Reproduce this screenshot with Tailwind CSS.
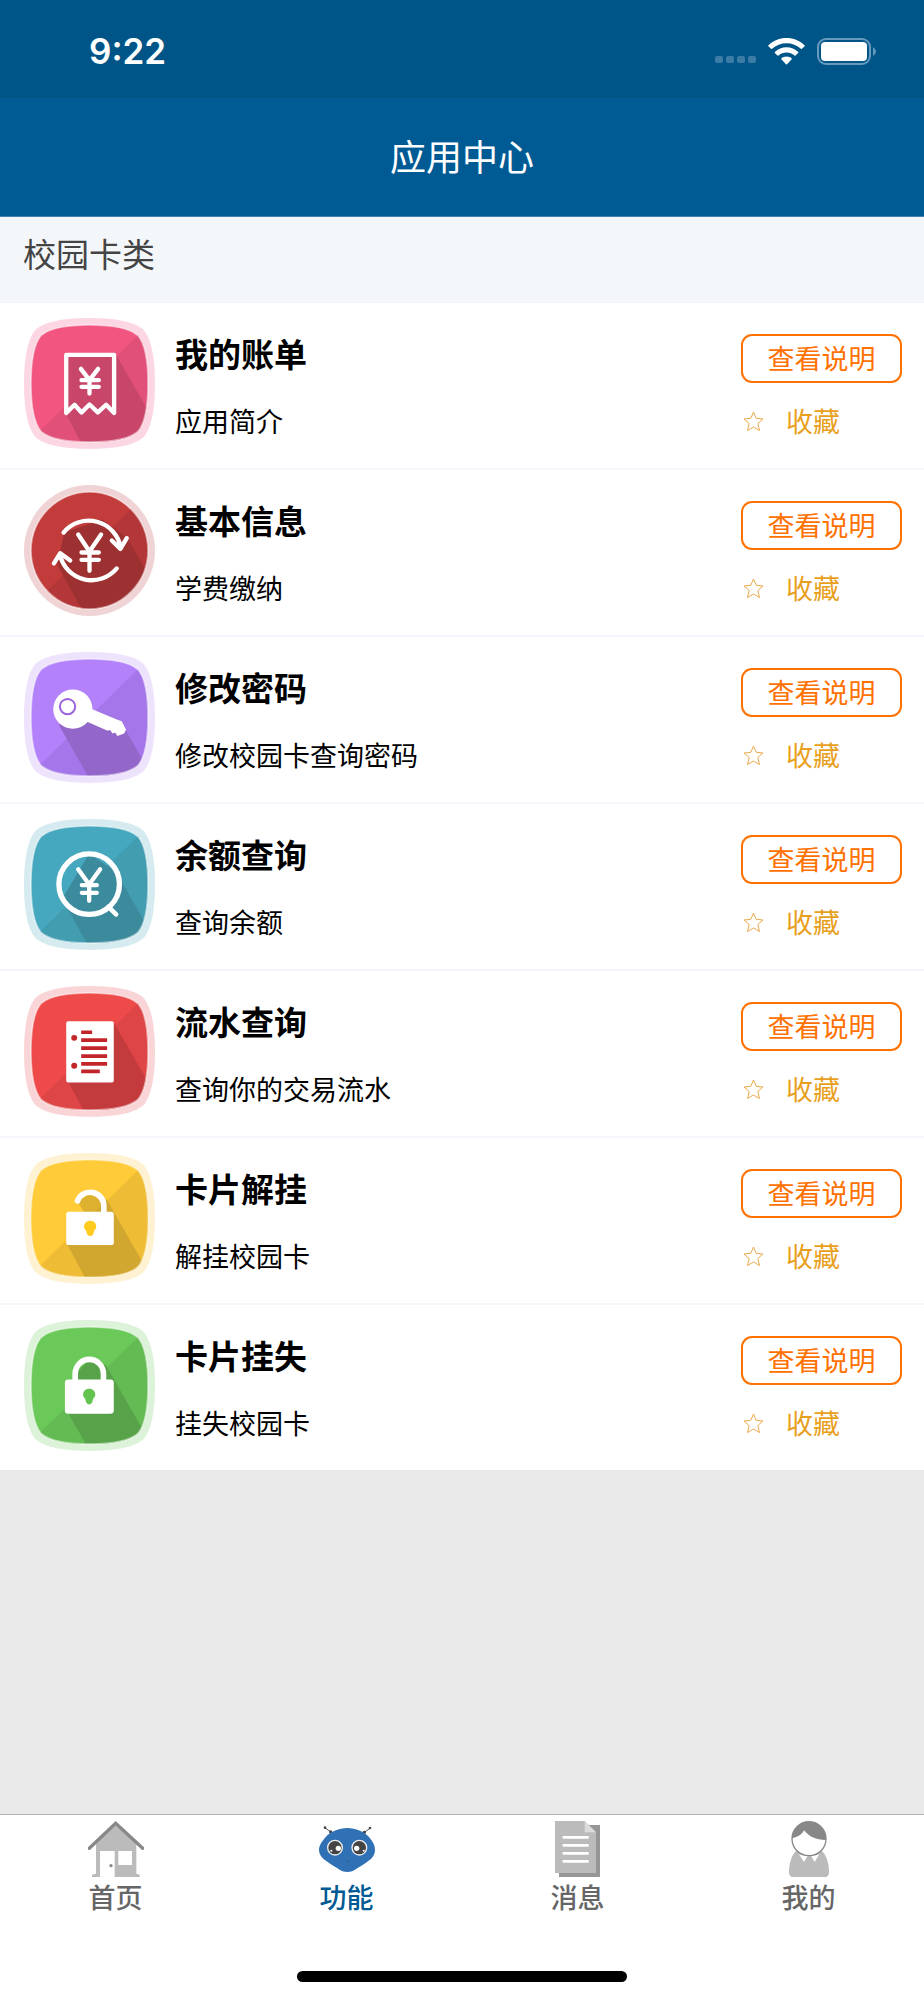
<!DOCTYPE html>
<html lang="zh-CN">
    <head>
        <meta charset="UTF-8" />
        <meta name="viewport" content="width=device-width, initial-scale=1.0" />
        <title>应用中心</title>
        <script src="https://cdn.jsdelivr.net/npm/@tailwindcss/browser@4"></script>
    </head>
    <body class="flex flex-col min-h-screen bg-[#eaeaea] text-black font-['Noto_Sans_CJK_SC',sans-serif]">
        <!-- shared shapes -->
        <svg class="hidden" aria-hidden="true">
            <defs>
                <path id="tile-outer" d="M197 0C262 0 329 8 359 35C386 65 394 132 394 197C394 262 386 329 359 359C329 386 262 394 197 394C132 394 65 386 35 359C8 329 0 262 0 197C0 132 8 65 35 35C65 8 132 0 197 0Z" />
                <path id="tile-inner" d="M197 21C255 21 315 28 342 52C366 79 373 139 373 197C373 255 366 315 342 342C315 366 255 373 197 373C139 373 79 366 52 342C28 315 21 255 21 197C21 139 28 79 52 52C79 28 139 21 197 21Z" />
            </defs>
        </svg>

        <header class="text-white">
            <div class="flex items-center justify-between h-[98px] pl-[89px] pr-[47px] pt-1 bg-[#005588]">
                <p class="font-['Inter',sans-serif] font-semibold text-[35px] leading-none">9:22</p>
                <div class="flex items-center gap-3">
                    <svg class="w-[41px] h-[27px]" viewBox="0 0 41 27" fill="#3b7ba5" aria-hidden="true">
                        <rect x="0" y="18" width="8" height="7" rx="2" />
                        <rect x="11" y="18" width="8" height="7" rx="2" />
                        <rect x="22" y="18" width="8" height="7" rx="2" />
                        <rect x="33" y="18" width="8" height="7" rx="2" />
                    </svg>
                    <svg class="w-[37px] h-[27px]" viewBox="0 0 37 27" fill="#fff" aria-hidden="true">
                        <path d="M18.500 0C11.500 0 5 2.700 .4 7.300Q0 7.800 .4 8.200L3 10.800Q3.500 11.200 4 10.800C8 7.100 13 5.200 18.500 5.200S29 7.100 33 10.800Q33.500 11.200 34 10.800L36.600 8.200Q37 7.800 36.600 7.300C32 2.700 25.500 0 18.500 0Z" />
                        <path d="M18.500 9.300C14 9.300 10 11 6.800 14Q6.400 14.500 6.800 14.900L9.500 17.600Q10 18 10.500 17.600C12.700 15.600 15.500 14.500 18.500 14.500S24.300 15.600 26.500 17.600Q27 18 27.500 17.600L30.200 14.900Q30.600 14.500 30.200 14C27 11 23 9.300 18.500 9.300Z" />
                        <path d="M18.500 18.500C16.500 18.500 14.700 19.200 13.300 20.400Q12.900 20.900 13.300 21.300L18 26.200Q18.500 26.700 19 26.200L23.700 21.300Q24.100 20.900 23.700 20.400C22.300 19.200 20.500 18.500 18.500 18.500Z" />
                    </svg>
                    <svg class="w-[60px] h-[27px]" viewBox="0 0 60 27" aria-hidden="true">
                        <rect x="1" y="1" width="52" height="25" rx="8" fill="none" stroke="#6699bb" stroke-width="2" />
                        <rect x="4" y="4" width="46" height="19" rx="4" fill="#fff" />
                        <path d="M56 9Q62 13.500 56 18Z" fill="#6699bb" />
                    </svg>
                </div>
            </div>
            <div class="flex items-center justify-center h-[119px] pb-[5px] bg-[#005a94] border-b border-[#3f82ae]">
                <h1 class="text-[36px] leading-none">应用中心</h1>
            </div>
        </header>

        <main class="grow">
            <h2 class="h-[84px] px-[23px] pt-[19px] bg-[#f4f7fa] text-[33px] leading-[34px] text-[#444]">校园卡类</h2>
            <ul class="bg-white">
                <li class="flex h-[167px] border-t-2 border-[#f3f7fb] pl-6 pr-[22px] pt-[15px]">
                    <svg class="size-[131px] shrink-0" viewBox="0 0 394 394" aria-hidden="true">
                        <clipPath id="tile-clip"><use href="#tile-inner" /></clipPath>
                        <use href="#tile-outer" fill="#fcd6e2" />
                        <g clip-path="url(#tile-clip)">
                            <rect width="394" height="394" fill="#f2557f" />
                            <path d="M394 2V394H-8Z" fill="#e05079" />
                            <path d="M127 111H277L394 315V394H182L127 290Z" fill="#c84669" />
                        </g>
                        <use href="#tile-inner" fill="none" stroke="#fff" stroke-opacity=".5" stroke-width="5" />
                        <g fill="none" stroke="#fff" stroke-width="13" stroke-linecap="round" stroke-linejoin="round">
                            <path d="M127 286V111H271V286L247 261L222 284L197 260L173 284L152 261Z" />
                            <path d="M171 153L197 187L223 153M197 187V227M173 187H225M173 207H225" />
                        </g>
                    </svg>
                    <div class="grow pl-5 pt-[15px]">
                        <h3 class="text-[33px] leading-[40px] font-bold">我的账单</h3>
                        <p class="mt-[31px] text-[27px] leading-[34px]">应用简介</p>
                    </div>
                    <div class="w-[161px] shrink-0 pt-4">
                        <button type="button" class="block w-full h-[49px] pb-[2px] rounded-[11px] border-2 border-[#ff7100] text-[27px] leading-none text-[#ff7100]">查看说明</button>
                        <button type="button" class="flex items-center gap-[22px] mt-[21px] pl-[2px] text-[27px] leading-[34px] text-[#e8a01c]">
                            <svg class="size-[21px]" viewBox="0 0 21 21" fill="none" stroke="#eca94c" aria-hidden="true"><path d="M10.500 1L13.200 7.300L20 8L14.800 12.500L16.500 19.500L10.500 16L4.500 19.500L6.200 12.500L1 8L7.800 7.300Z" stroke-linejoin="round" /></svg>
                            收藏
                        </button>
                    </div>
                </li>
                <li class="flex h-[167px] border-t-2 border-[#f3f7fb] pl-6 pr-[22px] pt-[15px]">
                    <svg class="size-[131px] shrink-0" viewBox="0 0 394 394" aria-hidden="true">
                        <clipPath id="round-clip"><circle cx="197" cy="197" r="176" /></clipPath>
                        <circle cx="197" cy="197" r="197" fill="#f0d3d4" />
                        <g clip-path="url(#round-clip)">
                            <rect width="394" height="394" fill="#c33c3c" />
                            <path d="M394 2V394H-8Z" fill="#b33738" />
                            <path d="M121 143L235 104L311 160L394 305V394H185L100 240Z" fill="#9d3031" />
                        </g>
                        <circle cx="197" cy="197" r="176" fill="none" stroke="#fff" stroke-opacity=".5" stroke-width="5" />
                        <g fill="none" stroke="#fff" stroke-width="13" stroke-linecap="round" stroke-linejoin="round">
                            <path d="M119 143A98 98 0 0 1 291 188M264 167L290 192L309 160" />
                            <path d="M279 251A98 98 0 0 1 108 210M90 236L109 205L139 227" />
                            <path d="M163 149L197 200L232 149M197 200V258M173 203H225M173 225H225" />
                        </g>
                    </svg>
                    <div class="grow pl-5 pt-[15px]">
                        <h3 class="text-[33px] leading-[40px] font-bold">基本信息</h3>
                        <p class="mt-[31px] text-[27px] leading-[34px]">学费缴纳</p>
                    </div>
                    <div class="w-[161px] shrink-0 pt-4">
                        <button type="button" class="block w-full h-[49px] pb-[2px] rounded-[11px] border-2 border-[#ff7100] text-[27px] leading-none text-[#ff7100]">查看说明</button>
                        <button type="button" class="flex items-center gap-[22px] mt-[21px] pl-[2px] text-[27px] leading-[34px] text-[#e8a01c]">
                            <svg class="size-[21px]" viewBox="0 0 21 21" fill="none" stroke="#eca94c" aria-hidden="true"><path d="M10.500 1L13.200 7.300L20 8L14.800 12.500L16.500 19.500L10.500 16L4.500 19.500L6.200 12.500L1 8L7.800 7.300Z" stroke-linejoin="round" /></svg>
                            收藏
                        </button>
                    </div>
                </li>
                <li class="flex h-[167px] border-t-2 border-[#f3f7fb] pl-6 pr-[22px] pt-[15px]">
                    <svg class="size-[131px] shrink-0" viewBox="0 0 394 394" aria-hidden="true">
                        <use href="#tile-outer" fill="#eee3fd" />
                        <g clip-path="url(#tile-clip)">
                            <rect width="394" height="394" fill="#b382fa" />
                            <path d="M394 2V394H-8Z" fill="#a576e9" />
                            <path d="M105 220L147 172L306 235L394 390V394H204Z" fill="#9367ca" />
                        </g>
                        <use href="#tile-inner" fill="none" stroke="#fff" stroke-opacity=".5" stroke-width="5" />
                        <circle cx="147" cy="172" r="59" fill="#fff" />
                        <path d="M200 170L279 203L294 208L307 234L301 245L281 253L274 242L266 245L260 235L250 236L190 210Z" fill="#fff" />
                        <circle cx="131" cy="164" r="23" fill="none" stroke="#9a63dc" stroke-width="6" />
                    </svg>
                    <div class="grow pl-5 pt-[15px]">
                        <h3 class="text-[33px] leading-[40px] font-bold">修改密码</h3>
                        <p class="mt-[31px] text-[27px] leading-[34px]">修改校园卡查询密码</p>
                    </div>
                    <div class="w-[161px] shrink-0 pt-4">
                        <button type="button" class="block w-full h-[49px] pb-[2px] rounded-[11px] border-2 border-[#ff7100] text-[27px] leading-none text-[#ff7100]">查看说明</button>
                        <button type="button" class="flex items-center gap-[22px] mt-[21px] pl-[2px] text-[27px] leading-[34px] text-[#e8a01c]">
                            <svg class="size-[21px]" viewBox="0 0 21 21" fill="none" stroke="#eca94c" aria-hidden="true"><path d="M10.500 1L13.200 7.300L20 8L14.800 12.500L16.500 19.500L10.500 16L4.500 19.500L6.200 12.500L1 8L7.800 7.300Z" stroke-linejoin="round" /></svg>
                            收藏
                        </button>
                    </div>
                </li>
                <li class="flex h-[167px] border-t-2 border-[#f3f7fb] pl-6 pr-[22px] pt-[15px]">
                    <svg class="size-[131px] shrink-0" viewBox="0 0 394 394" aria-hidden="true">
                        <use href="#tile-outer" fill="#d6ebf0" />
                        <g clip-path="url(#tile-clip)">
                            <rect width="394" height="394" fill="#46a8be" />
                            <path d="M394 2V394H-8Z" fill="#429db1" />
                            <path d="M196 104L278 160L394 365V394H200L115 240Z" fill="#3c8b9d" />
                        </g>
                        <use href="#tile-inner" fill="none" stroke="#fff" stroke-opacity=".5" stroke-width="5" />
                        <g fill="none" stroke="#fff" stroke-width="13" stroke-linecap="round" stroke-linejoin="round">
                            <path d="M163 151L196 197L229 151M196 197V246M174 199H219M174 222H219" />
                            <circle cx="196" cy="196" r="91" stroke-width="16" />
                            <path d="M254 264L277 287" stroke-width="14" />
                        </g>
                    </svg>
                    <div class="grow pl-5 pt-[15px]">
                        <h3 class="text-[33px] leading-[40px] font-bold">余额查询</h3>
                        <p class="mt-[31px] text-[27px] leading-[34px]">查询余额</p>
                    </div>
                    <div class="w-[161px] shrink-0 pt-4">
                        <button type="button" class="block w-full h-[49px] pb-[2px] rounded-[11px] border-2 border-[#ff7100] text-[27px] leading-none text-[#ff7100]">查看说明</button>
                        <button type="button" class="flex items-center gap-[22px] mt-[21px] pl-[2px] text-[27px] leading-[34px] text-[#e8a01c]">
                            <svg class="size-[21px]" viewBox="0 0 21 21" fill="none" stroke="#eca94c" aria-hidden="true"><path d="M10.500 1L13.200 7.300L20 8L14.800 12.500L16.500 19.500L10.500 16L4.500 19.500L6.200 12.500L1 8L7.800 7.300Z" stroke-linejoin="round" /></svg>
                            收藏
                        </button>
                    </div>
                </li>
                <li class="flex h-[167px] border-t-2 border-[#f3f7fb] pl-6 pr-[22px] pt-[15px]">
                    <svg class="size-[131px] shrink-0" viewBox="0 0 394 394" aria-hidden="true">
                        <use href="#tile-outer" fill="#fad5d7" />
                        <g clip-path="url(#tile-clip)">
                            <rect width="394" height="394" fill="#ed4a49" />
                            <path d="M394 2V394H-8Z" fill="#de4546" />
                            <path d="M270 110L394 325V394H190L133 288Z" fill="#c43b3d" />
                        </g>
                        <use href="#tile-inner" fill="none" stroke="#fff" stroke-opacity=".5" stroke-width="5" />
                        <rect x="127" y="106" width="143" height="184" rx="6" fill="#fff" />
                        <path d="M172 139H205M172 163H250M172 187H250M172 211H250M172 234H250M172 257H228" stroke="#c2262b" stroke-width="11" />
                        <circle cx="151" cy="156" r="9" fill="#c2262b" />
                        <circle cx="151" cy="240" r="9" fill="#c2262b" />
                    </svg>
                    <div class="grow pl-5 pt-[15px]">
                        <h3 class="text-[33px] leading-[40px] font-bold">流水查询</h3>
                        <p class="mt-[31px] text-[27px] leading-[34px]">查询你的交易流水</p>
                    </div>
                    <div class="w-[161px] shrink-0 pt-4">
                        <button type="button" class="block w-full h-[49px] pb-[2px] rounded-[11px] border-2 border-[#ff7100] text-[27px] leading-none text-[#ff7100]">查看说明</button>
                        <button type="button" class="flex items-center gap-[22px] mt-[21px] pl-[2px] text-[27px] leading-[34px] text-[#e8a01c]">
                            <svg class="size-[21px]" viewBox="0 0 21 21" fill="none" stroke="#eca94c" aria-hidden="true"><path d="M10.500 1L13.200 7.300L20 8L14.800 12.500L16.500 19.500L10.500 16L4.500 19.500L6.200 12.500L1 8L7.800 7.300Z" stroke-linejoin="round" /></svg>
                            收藏
                        </button>
                    </div>
                </li>
                <li class="flex h-[167px] border-t-2 border-[#f3f7fb] pl-6 pr-[22px] pt-[15px]">
                    <svg class="size-[131px] shrink-0" viewBox="0 0 394 394" aria-hidden="true">
                        <use href="#tile-outer" fill="#fff2d3" />
                        <g clip-path="url(#tile-clip)">
                            <rect width="394" height="394" fill="#ffcb38" />
                            <path d="M394 2V394H-8Z" fill="#efbd35" />
                            <path d="M161 146L199 120L240 150V180H182Z" fill="#deb030" />
                            <path d="M248 138L394 394H194L130 275Z" fill="#d2a72f" />
                        </g>
                        <use href="#tile-inner" fill="none" stroke="#fff" stroke-opacity=".3" stroke-width="5" />
                        <path d="M161 144A41 41 0 0 1 240 162V182" fill="none" stroke="#fff" stroke-width="17" stroke-linecap="round" />
                        <rect x="127" y="177" width="143" height="100" rx="8" fill="#fff" />
                        <path d="M199 204A17 17 0 0 1 211 234L208 245Q199 255 190 245L187 234A17 17 0 0 1 199 204Z" fill="#ffcb1f" />
                    </svg>
                    <div class="grow pl-5 pt-[15px]">
                        <h3 class="text-[33px] leading-[40px] font-bold">卡片解挂</h3>
                        <p class="mt-[31px] text-[27px] leading-[34px]">解挂校园卡</p>
                    </div>
                    <div class="w-[161px] shrink-0 pt-4">
                        <button type="button" class="block w-full h-[49px] pb-[2px] rounded-[11px] border-2 border-[#ff7100] text-[27px] leading-none text-[#ff7100]">查看说明</button>
                        <button type="button" class="flex items-center gap-[22px] mt-[21px] pl-[2px] text-[27px] leading-[34px] text-[#e8a01c]">
                            <svg class="size-[21px]" viewBox="0 0 21 21" fill="none" stroke="#eca94c" aria-hidden="true"><path d="M10.500 1L13.200 7.300L20 8L14.800 12.500L16.500 19.500L10.500 16L4.500 19.500L6.200 12.500L1 8L7.800 7.300Z" stroke-linejoin="round" /></svg>
                            收藏
                        </button>
                    </div>
                </li>
                <li class="flex h-[167px] border-t-2 border-[#f3f7fb] pl-6 pr-[22px] pt-[15px]">
                    <svg class="size-[131px] shrink-0" viewBox="0 0 394 394" aria-hidden="true">
                        <use href="#tile-outer" fill="#dcf2d9" />
                        <g clip-path="url(#tile-clip)">
                            <rect width="394" height="394" fill="#6ac958" />
                            <path d="M394 2V394H-8Z" fill="#64bb53" />
                            <path d="M156 160L198 119L246 135L394 394H198L130 275Z" fill="#58a349" />
                        </g>
                        <use href="#tile-inner" fill="none" stroke="#fff" stroke-opacity=".5" stroke-width="5" />
                        <path d="M154 184V162A42 43 0 0 1 239 162V184" fill="none" stroke="#fff" stroke-width="17" />
                        <rect x="123" y="179" width="147" height="103" rx="10" fill="#fff" />
                        <path d="M196 207A17 17 0 0 1 208 237L205 248Q196 260 187 248L184 237A17 17 0 0 1 196 207Z" fill="#63c450" />
                    </svg>
                    <div class="grow pl-5 pt-[15px]">
                        <h3 class="text-[33px] leading-[40px] font-bold">卡片挂失</h3>
                        <p class="mt-[31px] text-[27px] leading-[34px]">挂失校园卡</p>
                    </div>
                    <div class="w-[161px] shrink-0 pt-4">
                        <button type="button" class="block w-full h-[49px] pb-[2px] rounded-[11px] border-2 border-[#ff7100] text-[27px] leading-none text-[#ff7100]">查看说明</button>
                        <button type="button" class="flex items-center gap-[22px] mt-[21px] pl-[2px] text-[27px] leading-[34px] text-[#e8a01c]">
                            <svg class="size-[21px]" viewBox="0 0 21 21" fill="none" stroke="#eca94c" aria-hidden="true"><path d="M10.500 1L13.200 7.300L20 8L14.800 12.500L16.500 19.500L10.500 16L4.500 19.500L6.200 12.500L1 8L7.800 7.300Z" stroke-linejoin="round" /></svg>
                            收藏
                        </button>
                    </div>
                </li>
            </ul>
        </main>

        <footer class="bg-white border-t border-[#b2b2b2] pb-[18px]">
            <nav class="grid grid-cols-4 pt-[6px] text-[27px] leading-[34px] font-medium text-[#666]">
                <a href="#" class="flex flex-col items-center gap-[3px]">
                    <svg class="size-14" viewBox="0 0 168 168" aria-hidden="true">
                        <path d="M83 8L145 68V158L155 161V168H12V161L24 158V68Z" fill="#bbb" />
                        <path d="M36 90H80V168H36ZM91 90H132V132H91Z" fill="#fff" />
                        <circle cx="69" cy="134" r="5" fill="#888" />
                        <path d="M4 82L83 7L164 82" fill="none" stroke="#888" stroke-width="10" stroke-linecap="round" />
                    </svg>
                    首页
                </a>
                <a href="#" class="flex flex-col items-center gap-[3px] text-[#005a94]" aria-current="page">
                    <svg class="size-14" viewBox="0 0 168 168" aria-hidden="true">
                        <path d="M18 20L36 34M153 22L136 34" stroke="#555" stroke-width="3" />
                        <g fill="#444">
                            <circle cx="18" cy="20" r="4" />
                            <circle cx="153" cy="21" r="4" />
                            <circle cx="35" cy="33" r="5" />
                            <circle cx="136" cy="34" r="5" />
                        </g>
                        <path d="M85 21C110 21 135 32 150 48C162 62 168 74 168 86C168 103 158 113 145 122C132 131 120 138 108 146C94 155 76 155 62 146C50 138 38 131 25 122C12 113 0 103 0 86C0 74 8 62 20 48C35 32 60 21 85 21Z" fill="#3070b5" />
                        <circle cx="48" cy="80" r="22" fill="#444" stroke="#eee" stroke-width="4" />
                        <circle cx="121" cy="80" r="22" fill="#444" stroke="#eee" stroke-width="4" />
                        <g fill="#fff">
                            <circle cx="58" cy="82" r="8" />
                            <circle cx="113" cy="82" r="8" />
                            <circle cx="37" cy="89" r="3" />
                            <circle cx="134" cy="89" r="3" />
                        </g>
                        <path d="M80 119H92L86 124Z" fill="#3d5c80" />
                    </svg>
                    功能
                </a>
                <a href="#" class="flex flex-col items-center gap-[3px]">
                    <svg class="size-14" viewBox="0 0 168 168" aria-hidden="true">
                        <path d="M27 12H150V168H27Z" fill="#969696" />
                        <path d="M15 0H104L138 34V156H15Z" fill="#bbb" />
                        <path d="M104 0L138 34H104Z" fill="#dcdcdc" />
                        <path d="M41 49H113M41 73H113M41 97H113M41 121H113" stroke="#fff" stroke-width="8" stroke-linecap="round" />
                    </svg>
                    消息
                </a>
                <a href="#" class="flex flex-col items-center gap-[3px]">
                    <svg class="size-14" viewBox="0 0 168 168" aria-hidden="true">
                        <path d="M45 90C30 105 24 130 24 154Q24 168 36 168H132Q144 168 144 154C144 130 138 105 123 90Z" fill="#bbb" />
                        <path d="M54 100L69 123L80 104ZM90 104L101 123L115 100Z" fill="#fff" />
                        <circle cx="84" cy="53" r="51" fill="#fff" stroke="#888" stroke-width="4" />
                        <path d="M33 52A51 51 0 0 1 135 54L134 57C105 57 85 48 69 28C62 42 50 48 33 52Z" fill="#888" />
                    </svg>
                    我的
                </a>
            </nav>
            <div class="w-[330px] max-w-full h-[11px] mx-auto mt-[57px] rounded-full bg-black"></div>
        </footer>
    </body>
</html>
